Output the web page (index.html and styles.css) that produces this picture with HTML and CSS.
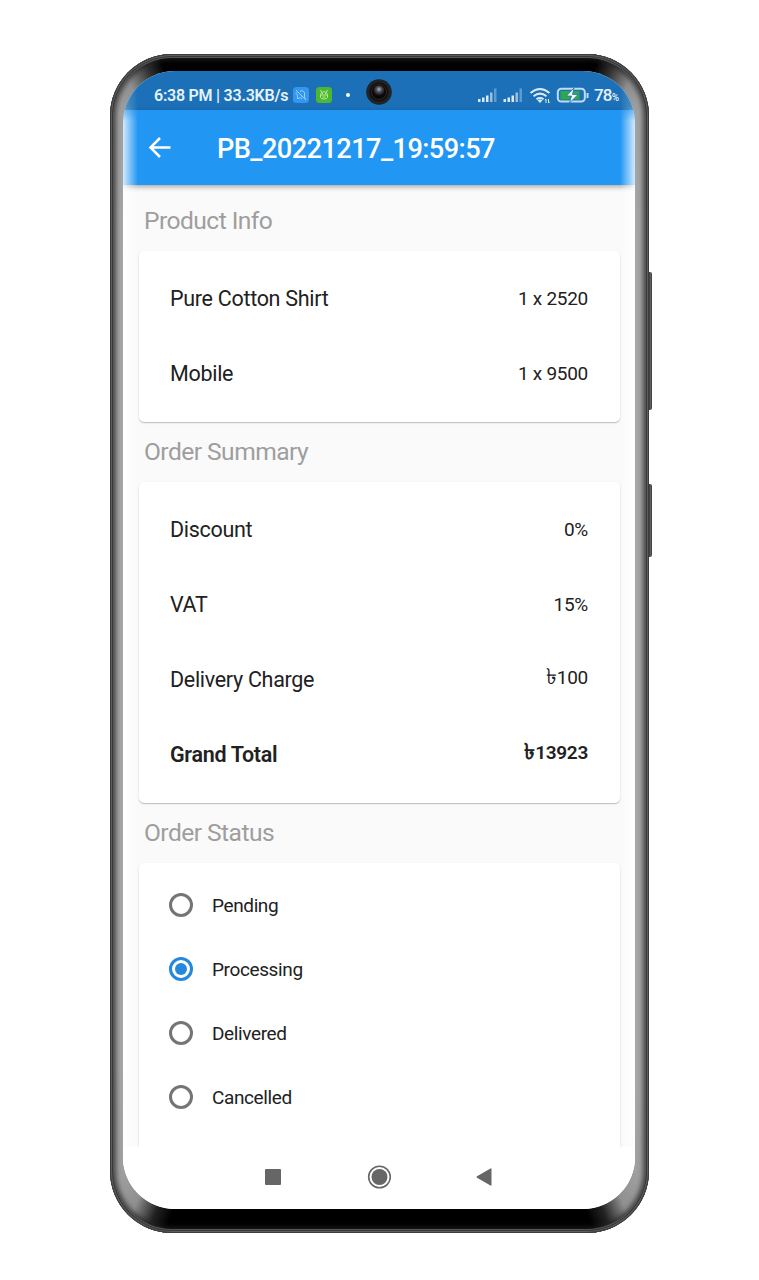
FILE: index.html
```
<!DOCTYPE html>
<html lang="en">
<head>
<meta charset="utf-8">
<title>Order Details</title>
<link rel="stylesheet" href="styles.css">
</head>
<body>
<div class="phone">
  <i class="side-key volume"></i>
  <i class="side-key power"></i>
  <main class="screen">
    <header class="status">
      <span class="clock">6:38 PM | 33.3KB/s</span>
      <svg class="app-icon" width="16" height="16" viewBox="0 0 16 16"><rect width="16" height="16" rx="3.5" fill="#3297f0"/><path d="M4.500 12V8L3 6.500 4.500 5M5 12l2-1.500L9 12M7 4.500l2-1 2.500 2V10l1 1.500M3 3l10 10M7 7l3 3.500" fill="none" stroke="#a5d2f8" stroke-width=".9"/></svg>
      <svg class="app-icon second" width="16" height="16" viewBox="0 0 16 16"><rect width="16" height="16" rx="3.5" fill="#4db731"/><g fill="none" stroke="#b9e99a" stroke-width="1"><path d="M5.500 5L4.500 3M10.500 5l1-2M4.500 7.500Q5 4.700 8 4.700t3.500 2.800v3Q11 12 8 12t-3.500-1.500zM4.500 8h7M6 6.500h1M9 6.500h1M6.500 10h3"/></g></svg>
      <i class="dot"></i>
      <svg class="camera" width="26" height="26" viewBox="0 0 26 26"><defs><radialGradient id="lens" cx=".5" cy=".35" r=".6"><stop offset="0" stop-color="#b5b5c0"/><stop offset=".4" stop-color="#50505c"/><stop offset="1" stop-color="#08080a"/></radialGradient></defs><circle cx="13" cy="13" r="12.800" fill="#202327"/><circle cx="13" cy="13" r="9.500" fill="#101010"/><circle cx="13" cy="13" r="7.500" fill="#080808" stroke="#35241b"/><circle cx="13" cy="12" r="5.500" fill="url(#lens)"/></svg>
      <svg class="signals" width="142" height="18" viewBox="0 0 142 18">
        <g id="bars" fill="#dceaf7"><path d="M1 12h2.500v3H1zM5 10.500h2.500V15H5zM9 8.500h2.500V15H9z"/><path d="M13 5.500h2.500V15H13z" opacity=".65"/><path d="M17 1.500h2.500V15H17z" opacity=".35"/></g>
        <use href="#bars" x="25.500"/>
        <g fill="none" stroke="#dceaf7" stroke-width="2"><path d="M53.500 6Q63-2 72.500 6M56.500 9.200q6.500-5.200 13 0M59.500 12.200q3.500-2.500 7 0"/></g>
        <path d="M60.500 13.300q2.500-1.500 5 0L63 16z" fill="#dceaf7"/>
        <path d="M69 12v4m-1.200-2.800L69 12M71.500 12v4m1.200-1.200L71.500 16" stroke="#dceaf7" fill="none"/>
        <rect x="80.800" y="1.800" width="27" height="12.800" rx="3.500" fill="none" stroke="#bfdcf6" stroke-width="2"/>
        <path d="M83.500 4h19v8.500h-19z" fill="#2fa84a"/>
        <path d="M97 1l-7.500 8h5l-2 7 8.500-8.500h-5.500z" fill="#fff" stroke="#1b70b7" stroke-width=".8"/>
        <path d="M110.500 6v5" stroke="#bfdcf6" stroke-width="2"/>
      </svg>
      <span class="battery">78<small>%</small></span>
    </header>
    <div class="appbar">
      <svg width="24" height="24" viewBox="0 0 24 24"><path d="M22.500 11.500H3M12 2L2.500 11.500l9.500 9.500" fill="none" stroke="#fff" stroke-width="2.500"/></svg>
      <h1>PB_20221217_19:59:57</h1>
    </div>
    <div class="content">
      <h2>Product Info</h2>
      <section class="card">
        <div class="row"><span>Pure Cotton Shirt</span><span class="value">1 x 2520</span></div>
        <div class="row"><span>Mobile</span><span class="value">1 x 9500</span></div>
      </section>
      <h2>Order Summary</h2>
      <section class="card">
        <div class="row"><span>Discount</span><span class="value">0%</span></div>
        <div class="row"><span>VAT</span><span class="value">15%</span></div>
        <div class="row"><span>Delivery Charge</span><span class="value taka"><span class="sign">৳</span>100</span></div>
        <div class="row total"><span>Grand Total</span><span class="value taka"><span class="sign">৳</span>13923</span></div>
      </section>
      <h2>Order Status</h2>
      <section class="card choices">
        <div class="choice"><i class="radio"></i>Pending</div>
        <div class="choice"><i class="radio checked"></i>Processing</div>
        <div class="choice"><i class="radio"></i>Delivered</div>
        <div class="choice"><i class="radio"></i>Cancelled</div>
      </section>
    </div>
    <nav class="nav">
      <svg width="24" height="24" viewBox="0 0 24 24"><rect x="4" y="4" width="16" height="16" rx="1" fill="#666"/></svg>
      <svg width="24" height="24" viewBox="0 0 24 24"><circle cx="12.500" cy="12" r="10.800" fill="none" stroke="#666" stroke-width="1.600"/><circle cx="12.500" cy="12" r="8" fill="#666"/></svg>
      <svg width="24" height="24" viewBox="0 0 24 24"><path d="M18.500 4v16q0 1-1 .5L4 12.800q-1-.8 0-1.600L17.500 3.500q1-.5 1 .5z" fill="#666"/></svg>
    </nav>
    <div class="edge"></div>
  </main>
</div>
</body>
</html>
```
FILE: styles.css
```
* { box-sizing: border-box; }
body { margin: 0; height: 1280px; overflow: hidden; background: #fff; font-family: Roboto, "Noto Sans", sans-serif; color: #212121; }
.phone {
  position: relative; width: 539px; height: 1179px; margin: 54px 0 0 110px; padding: 17px 14px 24px 13px; border-radius: 62px;
  background: conic-gradient(#000 0 20.500deg, #333 22deg, #909090 24deg, #a2a2a2 26deg, #a5a7a6 32deg 150deg, #a0a0a0 154deg, #909090 156.500deg, #222 158.500deg, #000 160deg 200deg, #222 201.500deg, #909090 203.500deg, #a0a0a0 206deg, #a5a7a6 212deg 328deg, #a0a0a0 334deg, #909090 336deg, #333 338deg, #000 339.500deg);
  box-shadow: inset 0 0 0 1px #3c3c3c, inset 0 0 0 2px #5e5e5e, inset 0 0 0 3px #383838, inset 0 0 0 4px #555, inset 0 0 5px 6px #222b;
}
.side-key { position: absolute; left: 539px; width: 3px; background: linear-gradient(90deg, #333, #606060 50%, #333); border-radius: 0 2px 2px 0; }
.volume { top: 218px; height: 138px; }
.power { top: 430px; height: 73px; }
.screen { position: relative; height: 1138px; display: flex; flex-direction: column; overflow: hidden; border-radius: 52px; background: #fff; }
.status { position: relative; flex: none; height: 39px; background: #1b70b8; color: #e6f2fc; display: flex; align-items: center; padding: 9px 0 0 31px; }
.clock { width: 139px; font-size: 16px; letter-spacing: -.24px; font-weight: 600; white-space: nowrap; }
.app-icon { margin-top: -1px; }
.second { margin-left: 7px; }
.dot { width: 4px; height: 4px; border-radius: 50%; background: #fff; margin-left: 14px; }
.camera { margin: -6px 0 0 16px; }
.signals { position: absolute; left: 354px; top: 16px; }
.battery { position: absolute; left: 471px; top: 14px; font-size: 17px; line-height: 20px; letter-spacing: -.8px; font-weight: 500; }
.battery small { font-size: 10px; }
.appbar { position: relative; z-index: 1; flex: none; height: 75px; background: #2196f3; display: flex; align-items: center; padding: 0 0 0 25px; box-shadow: 0 2px 5px #0005; }
.appbar h1 { margin: 2px 0 0 45px; font-size: 27.200px; letter-spacing: -.58px; font-weight: 500; color: #fff; line-height: 32px; white-space: nowrap; }
.content { flex: none; height: 962px; overflow: hidden; background: #fafafa; padding: 6px 15px 0 16px; }
h2 { margin: 0; height: 60px; padding: 0 0 0 5px; font-size: 24.600px; letter-spacing: -.55px; line-height: 60px; font-weight: 400; color: #9e9e9e; }
.card { background: #fff; border-radius: 5px; padding: 10.500px 32px 10.500px 31px; box-shadow: 0 1px 1px #0003, 0 1px 3px #0001; }
.row { height: 75px; display: flex; align-items: center; justify-content: space-between; font-size: 21.500px; letter-spacing: -.3px; }
.row > span:first-child { margin-top: -2px; }
.value { font-size: 19px; letter-spacing: -.28px; margin-top: -2px; }
.taka { line-height: 22px; margin-top: -4px; }
.sign { font-size: 22px; line-height: 0; }
.total { font-weight: 600; }
.choices { height: 320px; padding: 10px 32px 0 29.500px; }
.choice { height: 64.100px; display: flex; align-items: center; gap: 19.500px; font-size: 19px; letter-spacing: -.38px; }
.radio { display: grid; place-items: center; width: 24px; height: 24px; border: 3px solid #757575; border-radius: 50%; }
.checked { border-color: #2588dc; }
.checked::after { content: ""; width: 12px; height: 12px; border-radius: 50%; background: #2588dc; }
.nav { height: 62px; background: #fff; display: flex; align-items: center; justify-content: center; gap: 82px; padding-bottom: 2px; }
.edge {
  position: absolute; z-index: 2; inset: 0;
  background: linear-gradient(90deg, #fffc 0, #fff8 5px, #fff0 15px calc(100% - 15px), #fff8 calc(100% - 5px), #fffc);
  -webkit-mask-image: linear-gradient(#0005 35px, #000 50px); mask-image: linear-gradient(#0005 35px, #000 50px);
}
```
